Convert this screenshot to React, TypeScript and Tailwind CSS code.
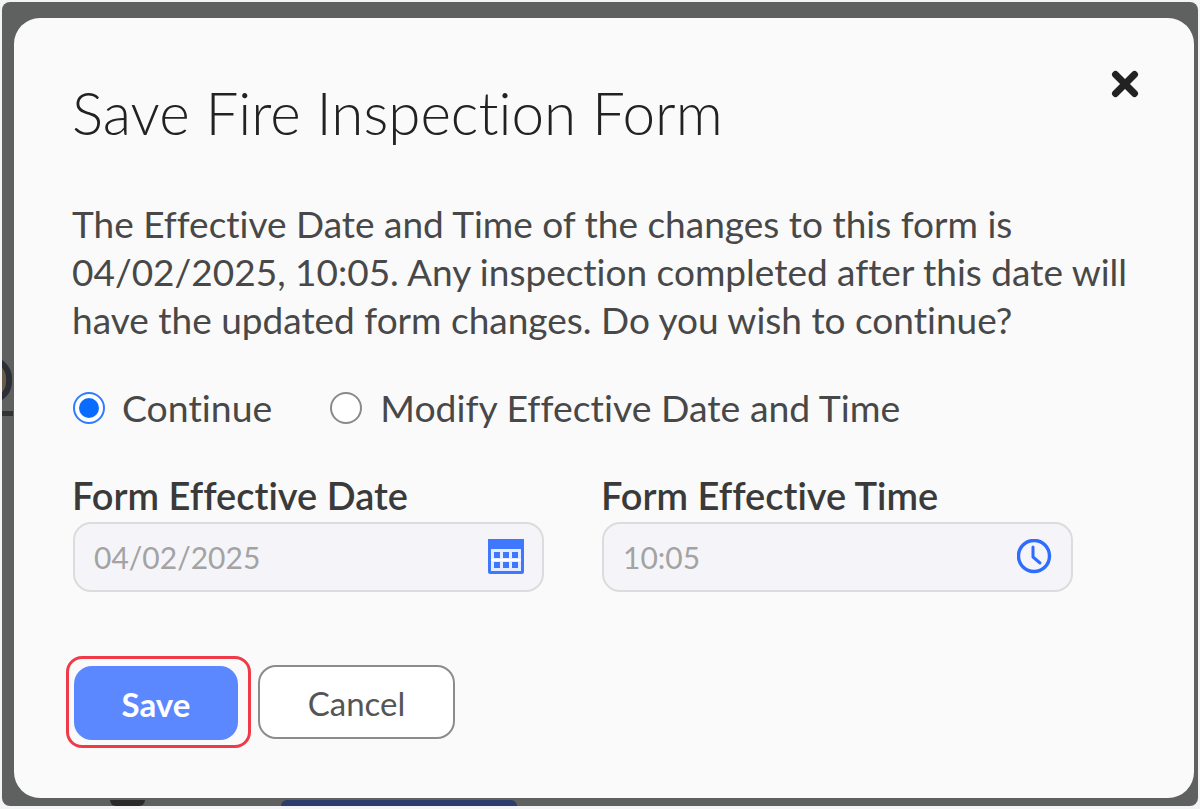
import { X } from 'lucide-react';

function CalendarIcon() {
    return (
        <svg width="36" height="36" viewBox="0 0 36 36" fill="none">
            <rect x="0" y="-1" width="36" height="36" rx="2" fill="#3f78ff" />
            <rect x="3" y="10" width="30" height="22" fill="#e4ecff" />
            <rect x="3" y="20" width="30" height="2" fill="#ffffff" />
            {[6, 15, 24].map((x) => (
                <g key={x}>
                    <rect x={x} y="13" width="6" height="6" fill="#3f78ff" />
                    <rect x={x} y="23" width="6" height="6" fill="#3f78ff" />
                </g>
            ))}
        </svg>
    );
}

function ClockIcon() {
    return (
        <svg width="36" height="36" viewBox="0 0 36 36" fill="none" stroke="#2f6dff" strokeWidth="3.4">
            <circle cx="17" cy="17" r="15.5" />
            <path d="M16 8v10l7 6" strokeWidth="3" strokeLinecap="round" strokeLinejoin="round" />
        </svg>
    );
}

function DateField({ label, value, icon }: { label: string; value: string; icon: React.ReactNode }) {
    return (
        <div className="w-[471px]">
            <div className="-ml-[1px] text-[38px] leading-[40px] font-semibold text-[#3a3a3a] whitespace-nowrap">{label}</div>
            <div className="mt-[7px] h-[70px] flex items-center justify-between pl-[19px] pr-[18px] rounded-[18px] border-2 border-[#dcdcdc] bg-[#f5f5f9]">
                <span className="text-[30px] text-[#a3a3a3]">{value}</span>
                {icon}
            </div>
        </div>
    );
}

export default function App() {
    return (
        <div className="w-[1200px] h-[809px] bg-[#f4f4f6] p-[2px] font-['Lato',sans-serif] [font-variant-ligatures:none]">
            <div className="relative overflow-hidden h-[804px] rounded-[8px] bg-[#5f6060] pt-[16px] pl-[12px] pr-[4px] pb-[8px]">
                {/* bits of the page behind the backdrop */}
                <span className="absolute -left-[32px] top-[355px] w-[42px] h-[46px] rounded-full border-[6px] border-[#2c2f36] bg-[#6a5a4c]" />
                <span className="absolute left-0 top-[409px] w-[11px] h-[5px] bg-[#333333]" />
                <span className="absolute left-[108px] top-[798px] w-[35px] h-[6px] rounded-b-full bg-[#2a2a2a]" />
                <span className="absolute left-[279px] top-[798px] w-[236px] h-[6px] rounded-t-[6px] bg-[#2c3c6b]" />
                <div className="relative h-[780px] rounded-[26px] bg-[#fafafa] pl-[59px] pt-[62px]">
                    <button className="absolute right-[50px] top-[47px] text-[#222222]">
                        <X size={38} strokeWidth={4.4} />
                    </button>
                    <h1 className="-ml-[1px] text-[58.4px] leading-[64px] font-light text-[#222222]">Save Fire Inspection Form</h1>
                    <p className="-ml-[1px] mt-[56px] w-[1080px] text-[37px] leading-[48px] text-[#484848]">
                        The Effective Date and Time of the changes to this form is 04/02/2025, 10:05. Any inspection completed after this date will have the updated form changes. Do you wish to continue?
                    </p>
                    <div className="mt-[40px] flex items-center h-[48px] text-[37.4px] text-[#484848]">
                        <span className="w-[32px] h-[32px] rounded-full border-2 border-[#2f7bff] bg-white flex items-center justify-center">
                            <span className="w-[20px] h-[20px] rounded-full bg-[#0a6cff]" />
                        </span>
                        <span className="ml-[17px]">Continue</span>
                        <span className="ml-[58px] w-[32px] h-[32px] rounded-full border-2 border-[#8a8a8a] bg-white" />
                        <span className="ml-[18px]">Modify Effective Date and Time</span>
                    </div>
                    <div className="mt-[43px] flex gap-[58px]">
                        <DateField label="Form Effective Date" value="04/02/2025" icon={<CalendarIcon />} />
                        <DateField label="Form Effective Time" value="10:05" icon={<ClockIcon />} />
                    </div>
                    <div className="mt-[64px] -ml-[7px] flex items-center gap-[7px]">
                        <div className="pt-[7px] pb-[5px] pl-[5px] pr-[10px] rounded-[16px] border-[3px] border-[#f03a47]">
                            <button className="block w-[164px] h-[74px] pt-[3px] rounded-[18px] bg-[#5b88ff] text-[33px] font-bold text-white">Save</button>
                        </div>
                        <button className="w-[197px] h-[74px] pt-[3px] rounded-[18px] border-2 border-[#8c8c8c] bg-white text-[33px] text-[#555555]">Cancel</button>
                    </div>
                </div>
            </div>
        </div>
    );
}
